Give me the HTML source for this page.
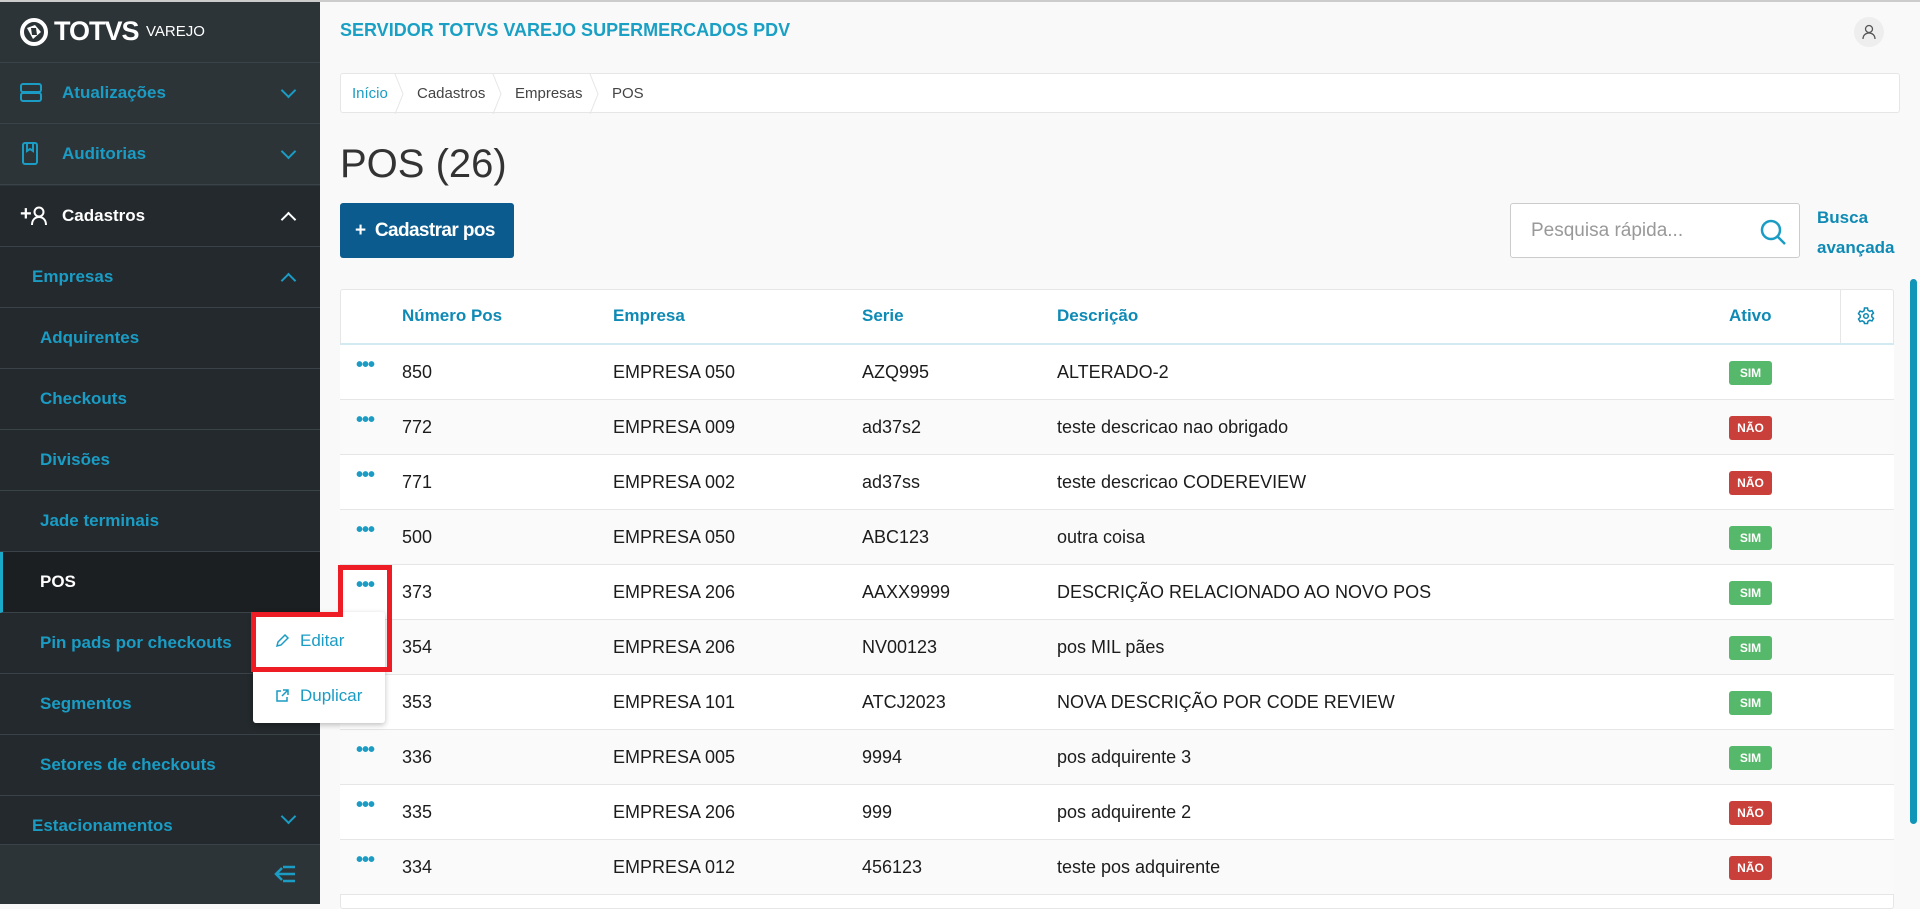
<!DOCTYPE html>
<html><head><meta charset="utf-8"><style>
*{box-sizing:border-box;margin:0;padding:0}
body{width:1920px;height:902px;overflow:hidden;background:#f9f9f9;font-family:"Liberation Sans",sans-serif;position:relative;border-top:2px solid #ccc;white-space:nowrap}
.sb{position:absolute;left:0;top:0;width:320px;height:902px;background:#2c3438}
.it{position:absolute;left:0;width:320px;height:61px;border-bottom:1px solid #3a4347;color:#1a9cc4;font-weight:bold;font-size:17px;display:flex;align-items:center}
.sub{background:#23292c}
.chev{position:absolute;right:26px;top:22px;width:11px;height:11px;border-right:2px solid #1a9cc4;border-bottom:2px solid #1a9cc4;transform:rotate(45deg)}
.up{transform:rotate(-135deg);top:28px}
.t{position:absolute;font-size:18px;color:#1c1c1c;white-space:nowrap}
.row{position:absolute;left:340px;width:1554px;height:55px;border-bottom:1px solid #e6e6e6}
.dots{position:absolute;left:356px;color:#1a9cc4;font-size:20px;font-weight:bold;letter-spacing:-1px}
.b{position:absolute;left:1729px;width:43px;height:24px;border-radius:3px;color:#fff;font-size:12px;font-weight:bold;text-align:center;line-height:24px}
.sim{background:#55b86a}.nao{background:#c9403b}
.h{position:absolute;top:304px;color:#0e8ab5;font-weight:bold;font-size:17px}
</style></head><body>
<div class="sb">
 <div style="position:absolute;left:0;top:0;width:320px;height:61px;border-bottom:1px solid #3a4347">
  <svg style="position:absolute;left:20px;top:13px" width="28" height="34" viewBox="0 0 28 34"><circle cx="14" cy="17" r="12" fill="none" stroke="#fff" stroke-width="4"/><path d="M7 13 L15 10 L21 17 L13 24 Z" fill="#fff"/><path d="M11 13 L16 13 L17 20 L12 20Z" fill="#2c3438"/></svg>
  <span style="position:absolute;left:54px;top:14px;color:#fff;font-weight:bold;font-size:27px;letter-spacing:-1px">TOTVS</span>
  <span style="position:absolute;left:146px;top:21px;color:#fff;font-size:15px">VAREJO</span>
 </div>
 <div class="it" style="top:61px;padding-left:62px">Atualizações<div class="chev"></div>
  <svg style="position:absolute;left:20px;top:20px" width="22" height="20"><rect x="1" y="1" width="20" height="8" rx="2" fill="none" stroke="#1a9cc4" stroke-width="2"/><rect x="1" y="10" width="20" height="8" rx="2" fill="none" stroke="#1a9cc4" stroke-width="2"/></svg></div>
 <div class="it" style="top:122px;padding-left:62px">Auditorias<div class="chev"></div>
  <svg style="position:absolute;left:22px;top:18px" width="16" height="24"><rect x="1" y="1" width="14" height="21" rx="2" fill="none" stroke="#1a9cc4" stroke-width="2"/><path d="M5 1v8l3-2 3 2V1" fill="none" stroke="#1a9cc4" stroke-width="2"/></svg></div>
 <div class="it sub" style="top:184px;padding-left:62px;color:#fff">Cadastros<div class="chev up" style="border-color:#fff"></div>
  <span style="position:absolute;left:20px;top:17px;font-size:20px;color:#fff">+</span>
  <svg style="position:absolute;left:31px;top:20px" width="16" height="20"><circle cx="8" cy="6" r="4.5" fill="none" stroke="#fff" stroke-width="2"/><path d="M1 19c0-5 3-8 7-8s7 3 7 8" fill="none" stroke="#fff" stroke-width="2"/></svg></div>
 <div class="it sub" style="top:245px;padding-left:32px">Empresas<div class="chev up"></div></div>
 <div class="it sub" style="top:306px;padding-left:40px">Adquirentes</div>
 <div class="it sub" style="top:367px;padding-left:40px">Checkouts</div>
 <div class="it sub" style="top:428px;padding-left:40px">Divisões</div>
 <div class="it sub" style="top:489px;padding-left:40px">Jade terminais</div>
 <div class="it" style="top:550px;background:#1b1f22;color:#fff;border-left:3px solid #1aa9c9;padding-left:37px">POS</div>
 <div class="it sub" style="top:611px;padding-left:40px">Pin pads por checkouts</div>
 <div class="it sub" style="top:672px;padding-left:40px">Segmentos</div>
 <div class="it sub" style="top:733px;padding-left:40px">Setores de checkouts</div>
 <div class="it sub" style="top:794px;height:49px;padding-left:32px;padding-top:12px">Estacionamentos<div class="chev" style="top:15px"></div></div>
 <div style="position:absolute;left:0;top:843px;width:320px;height:59px;background:#2c3438">
  <svg style="position:absolute;left:274px;top:20px" width="22" height="18"><path d="M9 2h12M9 9h12M9 16h12M8 3L2 9l6 6M2 9h7" fill="none" stroke="#1a9cc4" stroke-width="2.5"/></svg></div>
</div>

<div style="position:absolute;left:340px;top:18px;color:#1aa0c4;font-weight:bold;font-size:18px">SERVIDOR TOTVS VAREJO SUPERMERCADOS PDV</div>
<div style="position:absolute;left:1854px;top:15px;width:30px;height:30px;border-radius:50%;background:#eee"><svg style="position:absolute;left:8px;top:7px" width="14" height="16"><circle cx="7" cy="5" r="3.5" fill="none" stroke="#555" stroke-width="1.3"/><path d="M1 15c0-4 3-6 6-6s6 2 6 6" fill="none" stroke="#555" stroke-width="1.3"/></svg></div>

<div style="position:absolute;left:340px;top:71px;width:1560px;height:40px;background:#fff;border:1px solid #e6e6e6;border-radius:3px;font-size:15px;color:#444">
 <span style="position:absolute;left:11px;top:11px;color:#1a9cc4">Início</span>
 <span style="position:absolute;left:76px;top:11px">Cadastros</span>
 <span style="position:absolute;left:174px;top:11px">Empresas</span>
 <span style="position:absolute;left:271px;top:11px">POS</span>
 <svg style="position:absolute;left:0;top:0" width="300" height="40"><path d="M54 0l8 20-8 20M152 0l8 20-8 20M249 0l8 20-8 20" fill="none" stroke="#e6e6e6"/></svg>
</div>

<div style="position:absolute;left:340px;top:140px;font-size:40px;font-weight:300;color:#333">POS (26)</div>
<div style="position:absolute;left:340px;top:201px;width:174px;height:55px;background:#0b5b8e;border-radius:3px;color:#fff;font-weight:bold;font-size:19px;letter-spacing:-0.6px;line-height:55px;padding-left:15px">+&nbsp; Cadastrar pos</div>

<div style="position:absolute;left:1510px;top:201px;width:290px;height:55px;background:#fff;border:1px solid #ccc;border-radius:3px">
 <span style="position:absolute;left:20px;top:16px;font-size:19px;color:#999">Pesquisa rápida...</span>
 <svg style="position:absolute;left:248px;top:14px" width="28" height="28"><circle cx="12" cy="12" r="9" fill="none" stroke="#1a9cc4" stroke-width="2.5"/><path d="M18.5 18.5L26 26" stroke="#1a9cc4" stroke-width="2.5"/></svg>
</div>
<div style="position:absolute;left:1817px;top:201px;color:#0e8ab5;font-weight:bold;font-size:17px;line-height:30px">Busca<br>avançada</div>

<div style="position:absolute;left:340px;top:287px;width:1554px;height:620px;background:#fff;border:1px solid #e6e6e6;border-radius:3px"></div>
<div style="position:absolute;left:340px;top:341px;width:1554px;height:2px;background:#d4eaf3"></div>
<div style="position:absolute;left:1840px;top:287px;width:1px;height:54px;background:#e6e6e6"></div>
<span class="h" style="left:402px">Número Pos</span><span class="h" style="left:613px">Empresa</span><span class="h" style="left:862px">Serie</span><span class="h" style="left:1057px">Descrição</span><span class="h" style="left:1729px">Ativo</span>
<svg style="position:absolute;left:1857px;top:305px" width="18" height="18" viewBox="0 0 18 18"><path d="M7.5 1h3l.5 2.3 1.8 1 2.2-.8 1.5 2.6-1.7 1.6v2.1l1.7 1.6-1.5 2.6-2.2-.8-1.8 1-.5 2.3h-3L7 14.8l-1.8-1-2.2.8-1.5-2.6 1.7-1.6V8.3L1.5 6.7 3 4.1l2.2.8 1.8-1z" fill="none" stroke="#0e8ab5" stroke-width="1.5"/><circle cx="9" cy="9" r="2.3" fill="none" stroke="#0e8ab5" stroke-width="1.5"/></svg>

<div class="row" style="top:343px;background:#fff"></div>
<div class="row" style="top:398px;background:#fafafa"></div>
<div class="row" style="top:453px;background:#fff"></div>
<div class="row" style="top:508px;background:#fafafa"></div>
<div class="row" style="top:563px;background:#fff"></div>
<div class="row" style="top:618px;background:#fafafa"></div>
<div class="row" style="top:673px;background:#fff"></div>
<div class="row" style="top:728px;background:#fafafa"></div>
<div class="row" style="top:783px;background:#fff"></div>
<div class="row" style="top:838px;background:#fafafa"></div>

<span class="dots" style="top:352px">•••</span><span class="t" style="left:402px;top:360px">850</span><span class="t" style="left:613px;top:360px">EMPRESA 050</span><span class="t" style="left:862px;top:360px">AZQ995</span><span class="t" style="left:1057px;top:360px">ALTERADO-2</span><span class="b sim" style="top:359px">SIM</span>
<span class="dots" style="top:407px">•••</span><span class="t" style="left:402px;top:415px">772</span><span class="t" style="left:613px;top:415px">EMPRESA 009</span><span class="t" style="left:862px;top:415px">ad37s2</span><span class="t" style="left:1057px;top:415px">teste descricao nao obrigado</span><span class="b nao" style="top:414px">NÃO</span>
<span class="dots" style="top:462px">•••</span><span class="t" style="left:402px;top:470px">771</span><span class="t" style="left:613px;top:470px">EMPRESA 002</span><span class="t" style="left:862px;top:470px">ad37ss</span><span class="t" style="left:1057px;top:470px">teste descricao CODEREVIEW</span><span class="b nao" style="top:469px">NÃO</span>
<span class="dots" style="top:517px">•••</span><span class="t" style="left:402px;top:525px">500</span><span class="t" style="left:613px;top:525px">EMPRESA 050</span><span class="t" style="left:862px;top:525px">ABC123</span><span class="t" style="left:1057px;top:525px">outra coisa</span><span class="b sim" style="top:524px">SIM</span>
<span class="dots" style="top:572px">•••</span><span class="t" style="left:402px;top:580px">373</span><span class="t" style="left:613px;top:580px">EMPRESA 206</span><span class="t" style="left:862px;top:580px">AAXX9999</span><span class="t" style="left:1057px;top:580px">DESCRIÇÃO RELACIONADO AO NOVO POS</span><span class="b sim" style="top:579px">SIM</span>
<span class="dots" style="top:627px">•••</span><span class="t" style="left:402px;top:635px">354</span><span class="t" style="left:613px;top:635px">EMPRESA 206</span><span class="t" style="left:862px;top:635px">NV00123</span><span class="t" style="left:1057px;top:635px">pos MIL pães</span><span class="b sim" style="top:634px">SIM</span>
<span class="dots" style="top:682px">•••</span><span class="t" style="left:402px;top:690px">353</span><span class="t" style="left:613px;top:690px">EMPRESA 101</span><span class="t" style="left:862px;top:690px">ATCJ2023</span><span class="t" style="left:1057px;top:690px">NOVA DESCRIÇÃO POR CODE REVIEW</span><span class="b sim" style="top:689px">SIM</span>
<span class="dots" style="top:737px">•••</span><span class="t" style="left:402px;top:745px">336</span><span class="t" style="left:613px;top:745px">EMPRESA 005</span><span class="t" style="left:862px;top:745px">9994</span><span class="t" style="left:1057px;top:745px">pos adquirente 3</span><span class="b sim" style="top:744px">SIM</span>
<span class="dots" style="top:792px">•••</span><span class="t" style="left:402px;top:800px">335</span><span class="t" style="left:613px;top:800px">EMPRESA 206</span><span class="t" style="left:862px;top:800px">999</span><span class="t" style="left:1057px;top:800px">pos adquirente 2</span><span class="b nao" style="top:799px">NÃO</span>
<span class="dots" style="top:847px">•••</span><span class="t" style="left:402px;top:855px">334</span><span class="t" style="left:613px;top:855px">EMPRESA 012</span><span class="t" style="left:862px;top:855px">456123</span><span class="t" style="left:1057px;top:855px">teste pos adquirente</span><span class="b nao" style="top:854px">NÃO</span>

<div style="position:absolute;left:1910px;top:277px;width:7px;height:545px;background:#0e95b8;border-radius:4px"></div>

<div style="position:absolute;left:253px;top:610px;width:132px;height:111px;background:#fff;border-radius:3px;box-shadow:0 2px 6px rgba(0,0,0,.25)">
 <svg style="position:absolute;left:22px;top:22px" width="14" height="14"><path d="M2 12l1-4 7-7 3 3-7 7z" fill="none" stroke="#1a9cc4" stroke-width="1.5"/></svg>
 <span style="position:absolute;left:47px;top:19px;color:#1a9cc4;font-size:17px">Editar</span>
 <svg style="position:absolute;left:22px;top:77px" width="14" height="14"><path d="M6 2H2v10h10V8M8 1h5v5M13 1L7 7" fill="none" stroke="#1a9cc4" stroke-width="1.5"/></svg>
 <span style="position:absolute;left:47px;top:74px;color:#1a9cc4;font-size:17px">Duplicar</span>
</div>
<svg style="position:absolute;left:0;top:0" width="400" height="700"><path d="M340.5 565.5H389.5V667.5H253.5V612.5H340.5Z" fill="none" stroke="#ee1c25" stroke-width="5"/></svg>
</body></html>
